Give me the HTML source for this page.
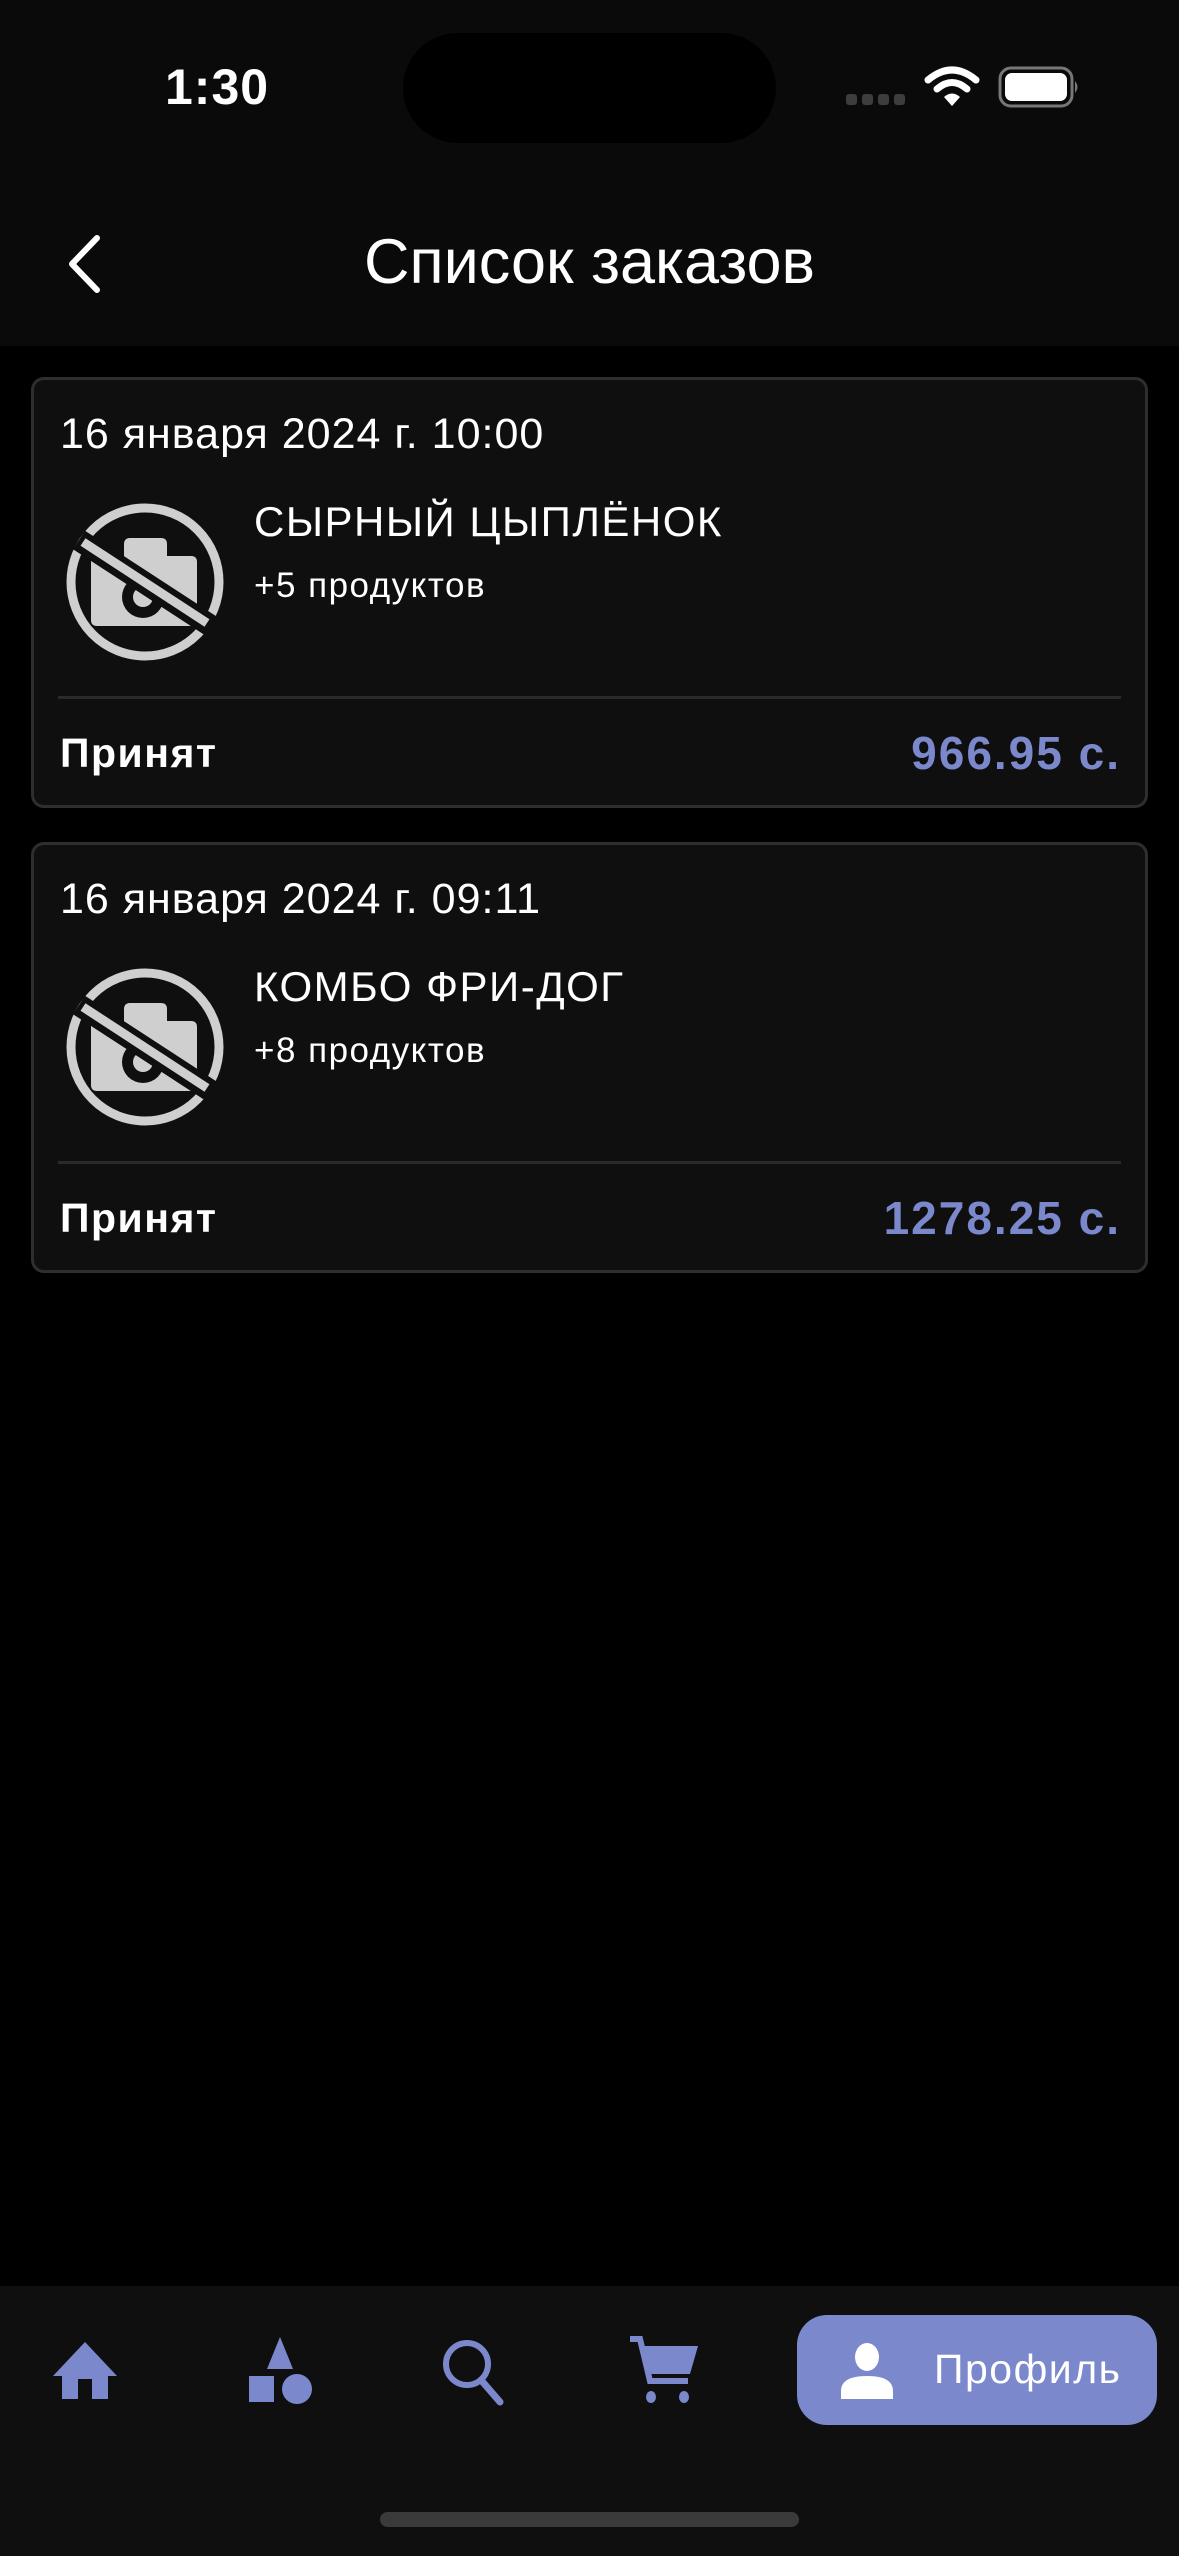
<!DOCTYPE html>
<html><head><meta charset="utf-8"><style>
*{margin:0;padding:0;box-sizing:border-box}
body{width:1179px;height:2556px;background:#000;position:relative;overflow:hidden;font-family:"Liberation Sans","DejaVu Sans",sans-serif;color:#fff}
.hdr{position:absolute;left:0;top:0;width:1179px;height:346px;background:#0a0a0a}
.time{position:absolute;left:165px;top:58px;font-size:50px;font-weight:bold;letter-spacing:1px}
.island{position:absolute;left:403px;top:33px;width:373px;height:110px;border-radius:55px;background:#000}
.title{position:absolute;left:0;width:1179px;text-align:center;top:226px;font-size:63px}
.card{position:absolute;left:31px;width:1117px;height:431px;background:#0f0f0f;border:3px solid #2e2e2e;border-radius:13px}
.date{position:absolute;left:26px;top:30px;font-size:43px;letter-spacing:1px}
.icon{position:absolute;left:31px;top:122px}
.name{position:absolute;left:220px;top:118px;font-size:42px;letter-spacing:1.5px}
.cnt{position:absolute;left:220px;top:186px;font-size:35px;letter-spacing:1.5px}
.div{position:absolute;left:24px;right:24px;top:316px;height:3px;background:#2a2a2a}
.st{position:absolute;left:26px;top:350px;font-size:41px;font-weight:bold;letter-spacing:1.5px}
.pr{position:absolute;right:24px;top:346px;font-size:46px;font-weight:bold;color:#7b88cc;letter-spacing:2px}
.nav{position:absolute;left:0;top:2286px;width:1179px;height:270px;background:#0f0f0f}
.pill{position:absolute;left:797px;top:2315px;width:360px;height:110px;border-radius:30px;background:#7b88cc}
.ptxt{position:absolute;left:137px;top:31px;font-size:41px;letter-spacing:1.5px}
.bar{position:absolute;left:380px;top:2512px;width:419px;height:15px;border-radius:8px;background:#3a3a3a}
</style></head><body>
<div class="hdr">
<div class="time">1:30</div>
<div class="island"></div>
<svg style="position:absolute;left:840px;top:90px" width="70" height="20"><g fill="#3d3d3d"><rect x="6" y="4" width="11" height="11" rx="3"/><rect x="22" y="4" width="11" height="11" rx="3"/><rect x="38" y="4" width="11" height="11" rx="3"/><rect x="54" y="4" width="11" height="11" rx="3"/></g></svg>
<svg style="position:absolute;left:924px;top:66px" width="56" height="42" viewBox="0 0 56 42"><g fill="none" stroke="#fff" stroke-width="7" stroke-linecap="round"><path d="M4 14 Q28 -6 52 14"/><path d="M13 23 Q28 10 43 23"/></g><path d="M20 31 Q28 24 36 31 L28 40 Z" fill="#fff"/></svg>
<svg style="position:absolute;left:998px;top:66px" width="84" height="42"><rect x="2" y="2" width="72" height="38" rx="11" fill="none" stroke="#777" stroke-width="3"/><rect x="7" y="7" width="62" height="28" rx="7" fill="#fff"/><path d="M77 15 Q82 21 77 27 Z" fill="#777"/></svg>
<svg style="position:absolute;left:60px;top:232px" width="50" height="64"><path d="M37 6 L12 32 L37 58" fill="none" stroke="#fff" stroke-width="6" stroke-linecap="round" stroke-linejoin="round"/></svg>
<div class="title">Список заказов</div>
</div>

<div class="card" style="top:377px">
<div class="date">16 января 2024 г. 10:00</div>
<svg class="icon" width="160" height="160" viewBox="0 0 160 160"><circle cx="80" cy="80" r="74" fill="none" stroke="#cfcfcf" stroke-width="9"/><path d="M26 56 H59 V42 Q59 36 65 36 H96 Q102 36 102 42 V54 H126 Q132 54 132 60 V118 Q132 124 126 124 H32 Q26 124 26 118 Z" fill="#cfcfcf"/><circle cx="78" cy="95" r="21" fill="#0f0f0f"/><circle cx="78" cy="95" r="10" fill="#cfcfcf"/><line x1="14" y1="38" x2="146" y2="124" stroke="#0f0f0f" stroke-width="22"/><line x1="18" y1="40" x2="142" y2="121" stroke="#cfcfcf" stroke-width="9"/></svg>
<div class="name">СЫРНЫЙ ЦЫПЛЁНОК</div>
<div class="cnt">+5 продуктов</div>
<div class="div"></div>
<div class="st">Принят</div>
<div class="pr">966.95 с.</div>
</div>

<div class="card" style="top:842px">
<div class="date">16 января 2024 г. 09:11</div>
<svg class="icon" width="160" height="160" viewBox="0 0 160 160"><circle cx="80" cy="80" r="74" fill="none" stroke="#cfcfcf" stroke-width="9"/><path d="M26 56 H59 V42 Q59 36 65 36 H96 Q102 36 102 42 V54 H126 Q132 54 132 60 V118 Q132 124 126 124 H32 Q26 124 26 118 Z" fill="#cfcfcf"/><circle cx="78" cy="95" r="21" fill="#0f0f0f"/><circle cx="78" cy="95" r="10" fill="#cfcfcf"/><line x1="14" y1="38" x2="146" y2="124" stroke="#0f0f0f" stroke-width="22"/><line x1="18" y1="40" x2="142" y2="121" stroke="#cfcfcf" stroke-width="9"/></svg>
<div class="name">КОМБО ФРИ-ДОГ</div>
<div class="cnt">+8 продуктов</div>
<div class="div"></div>
<div class="st">Принят</div>
<div class="pr">1278.25 с.</div>
</div>

<div class="nav"></div>
<svg style="position:absolute;left:50px;top:2340px" width="70" height="60" viewBox="0 0 70 60"><path d="M35 2 L3 36 H12 V59 H28 V39 H42 V59 H58 V36 H67 Z" fill="#7b88cc"/></svg>
<svg style="position:absolute;left:245px;top:2336px" width="70" height="70" viewBox="0 0 70 70"><path d="M35 1 L48 33 H22 Z" fill="#7b88cc"/><rect x="4" y="40" width="25" height="26" fill="#7b88cc"/><ellipse cx="52" cy="53" rx="15" ry="15" fill="#7b88cc"/></svg>
<svg style="position:absolute;left:438px;top:2336px" width="70" height="70" viewBox="0 0 70 70"><circle cx="29" cy="28" r="21" fill="none" stroke="#7b88cc" stroke-width="6"/><line x1="43" y1="44" x2="62" y2="66" stroke="#7b88cc" stroke-width="7" stroke-linecap="round"/></svg>
<svg style="position:absolute;left:628px;top:2336px" width="72" height="70" viewBox="0 0 72 70"><path d="M2 3 H12 L22 45 H60" fill="none" stroke="#7b88cc" stroke-width="6"/><path d="M14 10 H70 L62 38 H20 Z" fill="#7b88cc"/><ellipse cx="23" cy="61" rx="5" ry="6" fill="#7b88cc"/><ellipse cx="56" cy="61" rx="5" ry="6" fill="#7b88cc"/></svg>
<div class="pill">
<svg style="position:absolute;left:40px;top:28px" width="60" height="56" viewBox="0 0 60 56"><ellipse cx="30" cy="14" rx="12" ry="14" fill="#fff"/><path d="M4 56 V48 Q4 33 30 33 Q56 33 56 48 V56 Z" fill="#fff"/></svg>
<div class="ptxt">Профиль</div>
</div>
<div class="bar"></div>
</body></html>
